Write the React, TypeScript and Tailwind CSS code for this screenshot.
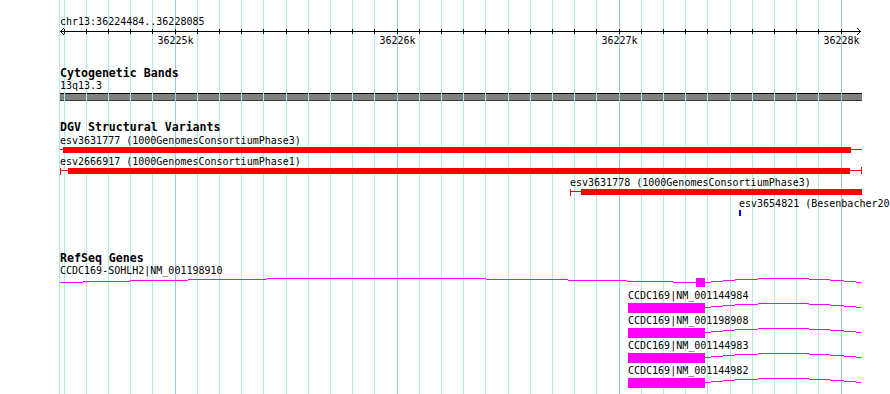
const GRID = Array.from({ length: 36 }, (_, k) => ({
  x: Math.floor(64 + 22.2 * k + 0.05),
  major: k % 10 === 5,
}));

const TICK_LABELS: Record<number, string> = {
  5: "36225k",
  15: "36226k",
  25: "36227k",
  35: "36228k",
};

const variants = [
  { label: "esv3631777 (1000GenomesConsortiumPhase3)", x0: 60, x1: 862, t0: 63, t1: 851, capL: false, capR: false },
  { label: "esv2666917 (1000GenomesConsortiumPhase1)", x0: 60, x1: 862, t0: 68, t1: 850, capL: true, capR: true },
  { label: "esv3631778 (1000GenomesConsortiumPhase3)", x0: 570, x1: 862, t0: 581, t1: 862, capL: true, capR: false },
];

const genes = [
  { label: "CCDC169-SOHLH2|NM_001198910", labelX: 60, box: [696, 705], boxH: 9, arches: [[60, 696], [705, 861]] },
  { label: "CCDC169|NM_001144984", labelX: 628, box: [628, 705], boxH: 10, arches: [[705, 861]] },
  { label: "CCDC169|NM_001198908", labelX: 628, box: [628, 705], boxH: 10, arches: [[705, 861]] },
  { label: "CCDC169|NM_001144983", labelX: 628, box: [628, 705], boxH: 10, arches: [[705, 861]] },
  { label: "CCDC169|NM_001144982", labelX: 628, box: [628, 705], boxH: 10, arches: [[705, 861]] },
];

function Grid() {
  return (
    <div className="pointer-events-none absolute inset-0 z-10">
      <div className="absolute top-0 bottom-0 left-[59px] w-px bg-[#aeeaf0]" />
      {GRID.map((g, i) => (
        <div
          key={i}
          className={g.major ? "absolute top-0 bottom-0 w-px bg-[#96c8e6]" : "absolute top-0 bottom-0 w-px bg-[#aeeaf0]"}
          style={{ left: g.x }}
        />
      ))}
    </div>
  );
}

function Ruler() {
  return (
    <div>
      <div className="relative z-20 w-fit ml-[60px] mt-[16px]">chr13:36224484..36228085</div>
      {/* axis */}
      <svg width={890} height={7} className="relative z-20 block overflow-visible" shapeRendering="crispEdges">
        <line x1={60} x2={861} y1={3.5} y2={3.5} stroke="#000" />
        {GRID.map((g, i) => (
          <line key={i} x1={g.x + 0.5} x2={g.x + 0.5} y1={1} y2={6} stroke="#000" />
        ))}
        <polyline points="64,0 60.5,3.5 64,7" fill="none" stroke="#000" />
        <polyline points="857,0 860.5,3.5 857,7" fill="none" stroke="#000" />
      </svg>
      <div className="relative z-20 h-[12px]">
        {GRID.map((g, i) =>
          TICK_LABELS[i] ? (
            <div key={i} className="absolute top-0 w-[36px] text-center" style={{ left: g.x + 0.5 - 18 }}>
              {TICK_LABELS[i]}
            </div>
          ) : null
        )}
      </div>
    </div>
  );
}

function TrackTitle({ children, className }: { children: string; className: string }) {
  return (
    <div className={`relative z-20 ml-[60px] w-fit text-[11.6px] font-bold leading-[14px] ${className}`}>{children}</div>
  );
}

export default function App() {
  return (
    <div className="relative h-[394px] w-[890px] overflow-hidden whitespace-nowrap bg-white font-['DejaVu_Sans_Mono',monospace] text-[10px] leading-[12px] text-black">
      <Grid />
      <Ruler />

      {/* cytogenetic bands */}
      <TrackTitle className="mt-[19px]">Cytogenetic Bands</TrackTitle>
      <div className="relative z-20 ml-[60px] w-fit">13q13.3</div>
      <div className="mt-px ml-[59px] h-[8px] w-[803px] border-t border-b border-t-black border-b-[#3a3a3a] bg-[#808080]" />

      {/* DGV */}
      <TrackTitle className="mt-[19px]">DGV Structural Variants</TrackTitle>
      <div className="pt-px">
        {variants.map((v, i) => (
          <div key={i} className="h-[21px]">
            <div className="relative z-20 w-fit" style={{ marginLeft: v.x0 }}>
              {v.label}
            </div>
            <svg width={890} height={6} className="relative z-20 block overflow-visible" shapeRendering="crispEdges">
              <rect x={v.x0} y={2} width={v.x1 - v.x0} height={1} fill="#ff0000" />
              <rect x={v.t0} y={0} width={v.t1 - v.t0} height={6} fill="#ff0000" />
              {v.capL && <rect x={v.x0} y={0} width={1} height={7} fill="#ff0000" />}
              {v.capR && <rect x={v.x1 - 1} y={-1} width={1} height={7} fill="#ff0000" />}
            </svg>
          </div>
        ))}
        <div>
          <div className="relative z-20 ml-[739px]">esv3654821 (Besenbacher2013)</div>
          <svg width={890} height={6} className="relative z-20 block" shapeRendering="crispEdges">
            <rect x={739} y={0} width={2} height={6} fill="#0000ff" />
          </svg>
        </div>
      </div>

      {/* RefSeq */}
      <TrackTitle className="mt-[35px]">RefSeq Genes</TrackTitle>
      {genes.map((g, i) => (
        <div key={i} className="h-[25px]">
          <div className="relative z-20 w-fit" style={{ marginLeft: g.labelX }}>
            {g.label}
          </div>
          <svg width={890} height={13} className="relative z-20 block overflow-visible" shapeRendering="crispEdges">
            {g.arches.map(([a, b], j) => (
              <path
                key={j}
                d={`M ${a} 5.5 Q ${(a + b) / 2} -2.5 ${b} 5.5`}
                fill="none"
                stroke="#ff00ff"
                strokeWidth={1}
              />
            ))}
            <rect x={g.box[0]} y={1} width={g.box[1] - g.box[0]} height={g.boxH} fill="#ff00ff" />
          </svg>
        </div>
      ))}
    </div>
  );
}
